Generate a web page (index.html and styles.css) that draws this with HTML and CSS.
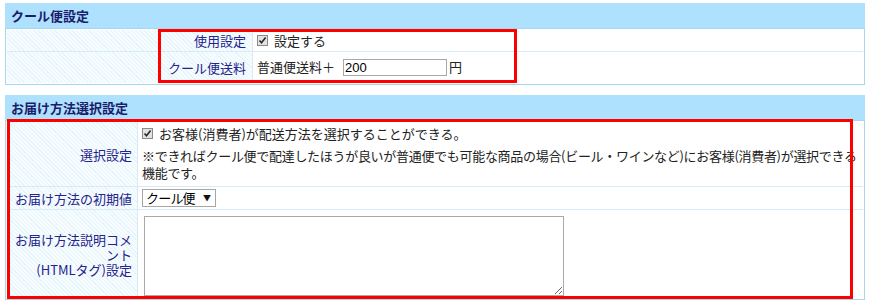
FILE: index.html
```html
<!DOCTYPE html>
<html lang="ja">
<head>
    <meta charset="UTF-8">
    <title>クール便設定</title>
    <link rel="stylesheet" href="styles.css">
</head>
<body>
    <div class="page">
        <!-- クール便設定 -->
        <div class="section">
            <h2 class="section-title">クール便設定</h2>
            <table class="form-table cool-table">
                <tr>
                    <th>使用設定</th>
                    <td>
                        <label class="check-label">
                            <svg class="check" width="11" height="11" viewBox="0 0 11 11"><rect x="0.5" y="0.5" width="10" height="10" fill="#e2e2e2" stroke="#8a8a8a"/><path d="M2.5 5.5 L4.5 7.8 L8.6 2.6" fill="none" stroke="#2a2a2a" stroke-width="1.6"/></svg>設定する
                        </label>
                    </td>
                </tr>
                <tr>
                    <th>クール便送料</th>
                    <td class="fee-cell">普通便送料＋ <input type="text" class="num-input" value="200">円</td>
                </tr>
            </table>
        </div>

        <!-- お届け方法選択設定 -->
        <div class="section">
            <h2 class="section-title">お届け方法選択設定</h2>
            <table class="form-table delivery-table">
                <tr class="row-select">
                    <th>選択設定</th>
                    <td>
                        <label class="check-label">
                            <svg class="check" width="11" height="11" viewBox="0 0 11 11"><rect x="0.5" y="0.5" width="10" height="10" fill="#e2e2e2" stroke="#8a8a8a"/><path d="M2.5 5.5 L4.5 7.8 L8.6 2.6" fill="none" stroke="#2a2a2a" stroke-width="1.6"/></svg>お客様(消費者)が配送方法を選択することができる。
                        </label>
                        <p class="note">※できればクール便で配達したほうが良いが普通便でも可能な商品の場合(ビール・ワインなど)にお客様(消費者)が選択できる機能です。</p>
                    </td>
                </tr>
                <tr class="row-default">
                    <th>お届け方法の初期値</th>
                    <td>
                        <span class="select-wrap">
                            <select class="select">
                                <option>クール便</option>
                                <option>普通便</option>
                            </select>
                        </span>
                    </td>
                </tr>
                <tr class="row-comment">
                    <th class="multi-line">お届け方法説明コメント
(HTMLタグ)設定</th>
                    <td><textarea class="comment"></textarea></td>
                </tr>
            </table>
        </div>

        <!-- 赤枠 -->
        <div class="mark mark-cool"></div>
        <div class="mark mark-delivery"></div>
    </div>
</body>
</html>
```

FILE: styles.css
```css
body {
    margin: 0;
    background-color: #ffffff;
    font-family: "Noto Sans CJK JP", "Liberation Sans", sans-serif;
    font-size: 13px;
    color: #222222;
}
.page {
    position: relative;
    padding: 3px 4px 0 5px;
}
.section {
    margin-bottom: 10px;
}
.section-title {
    margin: 0;
    height: 25px;
    line-height: 25px;
    padding: 0 6px;
    background-color: #ade1fe;
    color: #1c1c6c;
    font-size: 13px;
    font-weight: bold;
}
.form-table {
    width: 100%;
    border-collapse: separate;
    border-spacing: 0;
    border: 1px solid #a9d6ec;
    padding: 1px;
    background-color: #ffffff;
}
.form-table th,
.form-table td {
    border-bottom: 1px solid #d6ebf6;
    line-height: 15px;
}
.form-table tr:last-child th,
.form-table tr:last-child td {
    border-bottom: none;
}
.form-table th {
    text-align: right;
    vertical-align: middle;
    font-weight: normal;
    color: #23238c;
    padding: 3px 6px 3px 4px;
    border-right: 1px solid #d6ebf6;
    background: repeating-linear-gradient(45deg, #e6f4fc 0 1px, #f7fcff 1px 3px);
}
.form-table td {
    text-align: left;
    vertical-align: middle;
    padding: 3px 0 3px 4px;
}
.cool-table th {
    width: 235px;
}
.delivery-table th {
    width: 121px;
    padding-right: 5px;
}
.multi-line {
    white-space: pre-line;
    line-height: 14px;
}
.check-label {
    display: inline-flex;
    align-items: center;
    gap: 6px;
}
.check {
    display: block;
    flex: none;
}
.fee-cell {
    height: 25px;
}
.num-input {
    width: 100px;
    height: 15px;
    margin: 0 2px 0 5px;
    padding: 0 1px;
    border: 1px solid #a8a8a8;
    font-family: "Liberation Sans", Arial, sans-serif;
    font-size: 13px;
    color: #000000;
    vertical-align: middle;
}
.row-select td {
    line-height: 17px;
    padding-bottom: 5px;
}
.note {
    margin: 5px 0 0;
    letter-spacing: -0.3px;
}
.row-default td {
    padding: 2px 0 2px 4px;
}
.select-wrap {
    position: relative;
    display: inline-block;
    vertical-align: middle;
}
.select-wrap::after {
    content: "▼";
    position: absolute;
    right: 5px;
    top: 3px;
    font-size: 8px;
    line-height: 12px;
    color: #111111;
    pointer-events: none;
}
.select {
    appearance: none;
    -webkit-appearance: none;
    width: 74px;
    height: 18px;
    padding: 0 0 0 3px;
    border: 1px solid #a6a6a6;
    border-radius: 0;
    background-color: #ffffff;
    font-family: "Noto Sans CJK JP", sans-serif;
    font-size: 13px;
    letter-spacing: -0.8px;
    line-height: 16px;
    color: #000000;
}
.row-comment td {
    padding: 6px 0 2px 6px;
}
.comment {
    display: block;
    width: 414px;
    height: 74px;
    margin: 0;
    padding: 2px;
    border: 1px solid #a9a9a9;
    resize: both;
}
.mark {
    position: absolute;
    border: 3px solid #ff0000;
    pointer-events: none;
}
.mark-cool {
    left: 158px;
    top: 29px;
    width: 353px;
    height: 48px;
}
.mark-delivery {
    left: 7px;
    top: 119px;
    width: 840px;
    height: 174px;
}
```
